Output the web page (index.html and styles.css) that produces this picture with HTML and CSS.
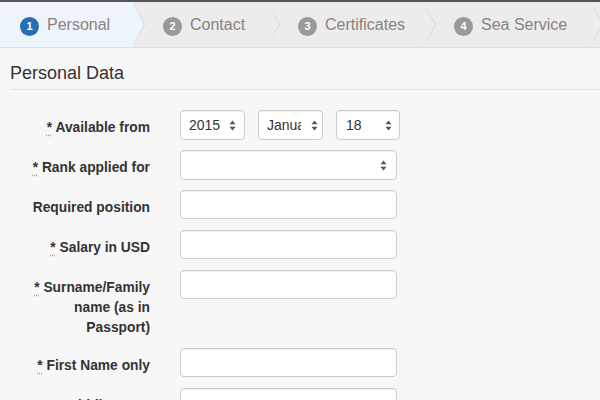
FILE: index.html
```html
<!DOCTYPE html>
<html>
<head>
<meta charset="utf-8">
<link rel="stylesheet" href="styles.css">
</head>
<body>
<div class="topbar"></div>
<nav class="wizard">
  <div class="step active s1"><span class="badge">1</span><span class="step-label">Personal</span></div>
  <div class="step s2"><span class="badge">2</span><span class="step-label">Contact</span></div>
  <div class="step s3"><span class="badge">3</span><span class="step-label">Certificates</span></div>
  <div class="step s4"><span class="badge">4</span><span class="step-label">Sea Service</span></div>
</nav>
<main class="content">
  <h2 class="section-title">Personal Data</h2>
  <form class="form">
    <div class="row">
      <label class="label"><abbr title="required">*</abbr> Available from</label>
      <div class="controls dates">
        <div class="select w-year"><span class="sel-text">2015</span><svg class="updown" width="7" height="11" viewBox="0 0 7 11"><path d="M3.5 0.5 L6.5 4.3 H0.5 Z M3.5 10.5 L6.5 6.7 H0.5 Z" fill="#555"/></svg></div>
        <div class="select w-month"><span class="sel-text">January</span><svg class="updown" width="7" height="11" viewBox="0 0 7 11"><path d="M3.5 0.5 L6.5 4.3 H0.5 Z M3.5 10.5 L6.5 6.7 H0.5 Z" fill="#555"/></svg></div>
        <div class="select w-day"><span class="sel-text">18</span><svg class="updown" width="7" height="11" viewBox="0 0 7 11"><path d="M3.5 0.5 L6.5 4.3 H0.5 Z M3.5 10.5 L6.5 6.7 H0.5 Z" fill="#555"/></svg></div>
      </div>
    </div>
    <div class="row">
      <label class="label"><abbr title="required">*</abbr> Rank applied for</label>
      <div class="controls">
        <div class="select wide"><span class="sel-text"></span><svg class="updown" width="7" height="11" viewBox="0 0 7 11"><path d="M3.5 0.5 L6.5 4.3 H0.5 Z M3.5 10.5 L6.5 6.7 H0.5 Z" fill="#555"/></svg></div>
      </div>
    </div>
    <div class="row">
      <label class="label">Required position</label>
      <div class="controls"><input class="input" type="text"></div>
    </div>
    <div class="row">
      <label class="label"><abbr title="required">*</abbr> Salary in USD</label>
      <div class="controls"><input class="input" type="text"></div>
    </div>
    <div class="row">
      <label class="label"><abbr title="required">*</abbr> Surname/Family name (as in Passport)</label>
      <div class="controls"><input class="input" type="text"></div>
    </div>
    <div class="row">
      <label class="label"><abbr title="required">*</abbr> First Name only</label>
      <div class="controls"><input class="input" type="text"></div>
    </div>
    <div class="row">
      <label class="label">Middle name</label>
      <div class="controls"><input class="input" type="text"></div>
    </div>
  </form>
</main>
</body>
</html>
```

FILE: styles.css
```css
html, body {
  margin: 0;
  padding: 0;
}
body {
  background: #f7f7f7;
  font-family: "Liberation Sans", Arial, Helvetica, sans-serif;
  color: #333;
  overflow: hidden;
}
.topbar {
  height: 2px;
  background: #555;
}
.wizard {
  display: flex;
  height: 45px;
  background: #ececec;
  border-bottom: 1px solid #dedede;
  overflow: hidden;
}
.step {
  position: relative;
  display: flex;
  align-items: center;
  box-sizing: border-box;
  padding-left: 31px;
  font-size: 16px;
  color: #8a827d;
  background: #ececec;
  flex: none;
}
.step::before,
.step::after {
  content: "";
  position: absolute;
  top: 0;
  height: 100%;
  clip-path: polygon(0 0, 100% 50%, 0 100%);
  z-index: 1;
}
.step::before {
  right: -13px;
  width: 13px;
  background: #d3d3d3;
}
.step::after {
  right: -12px;
  width: 12px;
  background: #ececec;
}
.step.active,
.step.active::after {
  background: #eef4fb;
}
.s1 { width: 132px; padding-left: 20px; }
.s2 { width: 135px; }
.s3 { width: 156px; }
.s4 { width: 167px; }
.badge {
  display: inline-flex;
  align-items: center;
  justify-content: center;
  width: 19px;
  height: 19px;
  border-radius: 50%;
  background: #999;
  color: #fff;
  font-size: 11px;
  font-weight: bold;
  margin-right: 8px;
  margin-top: 3px;
}
.active .badge {
  background: #2a6db3;
}
.content {
  padding-left: 10px;
}
.section-title {
  margin: 15px 0 0;
  padding-bottom: 5px;
  font-size: 18px;
  line-height: 21px;
  font-weight: normal;
  color: #333;
  border-bottom: 1px solid #e3e3e3;
}
.form {
  margin-top: 20px;
}
.row {
  display: flex;
  align-items: flex-start;
  margin-bottom: 10px;
}
.label {
  box-sizing: border-box;
  width: 125px;
  margin-left: 15px;
  padding: 8px 0 0;
  text-align: right;
  font-size: 13.8px;
  line-height: 20px;
  font-weight: bold;
  color: #333;
}
abbr {
  text-decoration: underline dotted #999;
  text-underline-offset: 3px;
  border: none;
  cursor: help;
}
.controls {
  margin-left: 30px;
}
.dates {
  display: flex;
  gap: 13px;
}
.select {
  box-sizing: border-box;
  height: 30px;
  display: flex;
  align-items: center;
  background: #fff;
  border: 1px solid #ccc;
  border-radius: 4px;
  box-shadow: inset 0 1px 1px rgba(0, 0, 0, 0.06);
  padding: 0 8px 0 8px;
  font-size: 14px;
  color: #333;
}
.sel-text {
  flex: 1;
  overflow: hidden;
  white-space: nowrap;
}
.updown {
  flex: none;
  margin-left: 8px;
}
.w-year { width: 65px; }
.w-month { width: 65px; }
.w-month .sel-text { flex: none; width: 34px; margin-right: 2px; }
.w-day { width: 64px; padding-left: 9px; padding-right: 7px; }
.wide { width: 217px; padding-right: 9px; }
.input {
  display: block;
  box-sizing: border-box;
  width: 217px;
  height: 29px;
  margin: 0 0 1px;
  background: #fff;
  border: 1px solid #ccc;
  border-radius: 4px;
  box-shadow: inset 0 1px 1px rgba(0, 0, 0, 0.06);
  font: 14px "Liberation Sans", Arial, sans-serif;
  padding: 4px 8px;
}
```
